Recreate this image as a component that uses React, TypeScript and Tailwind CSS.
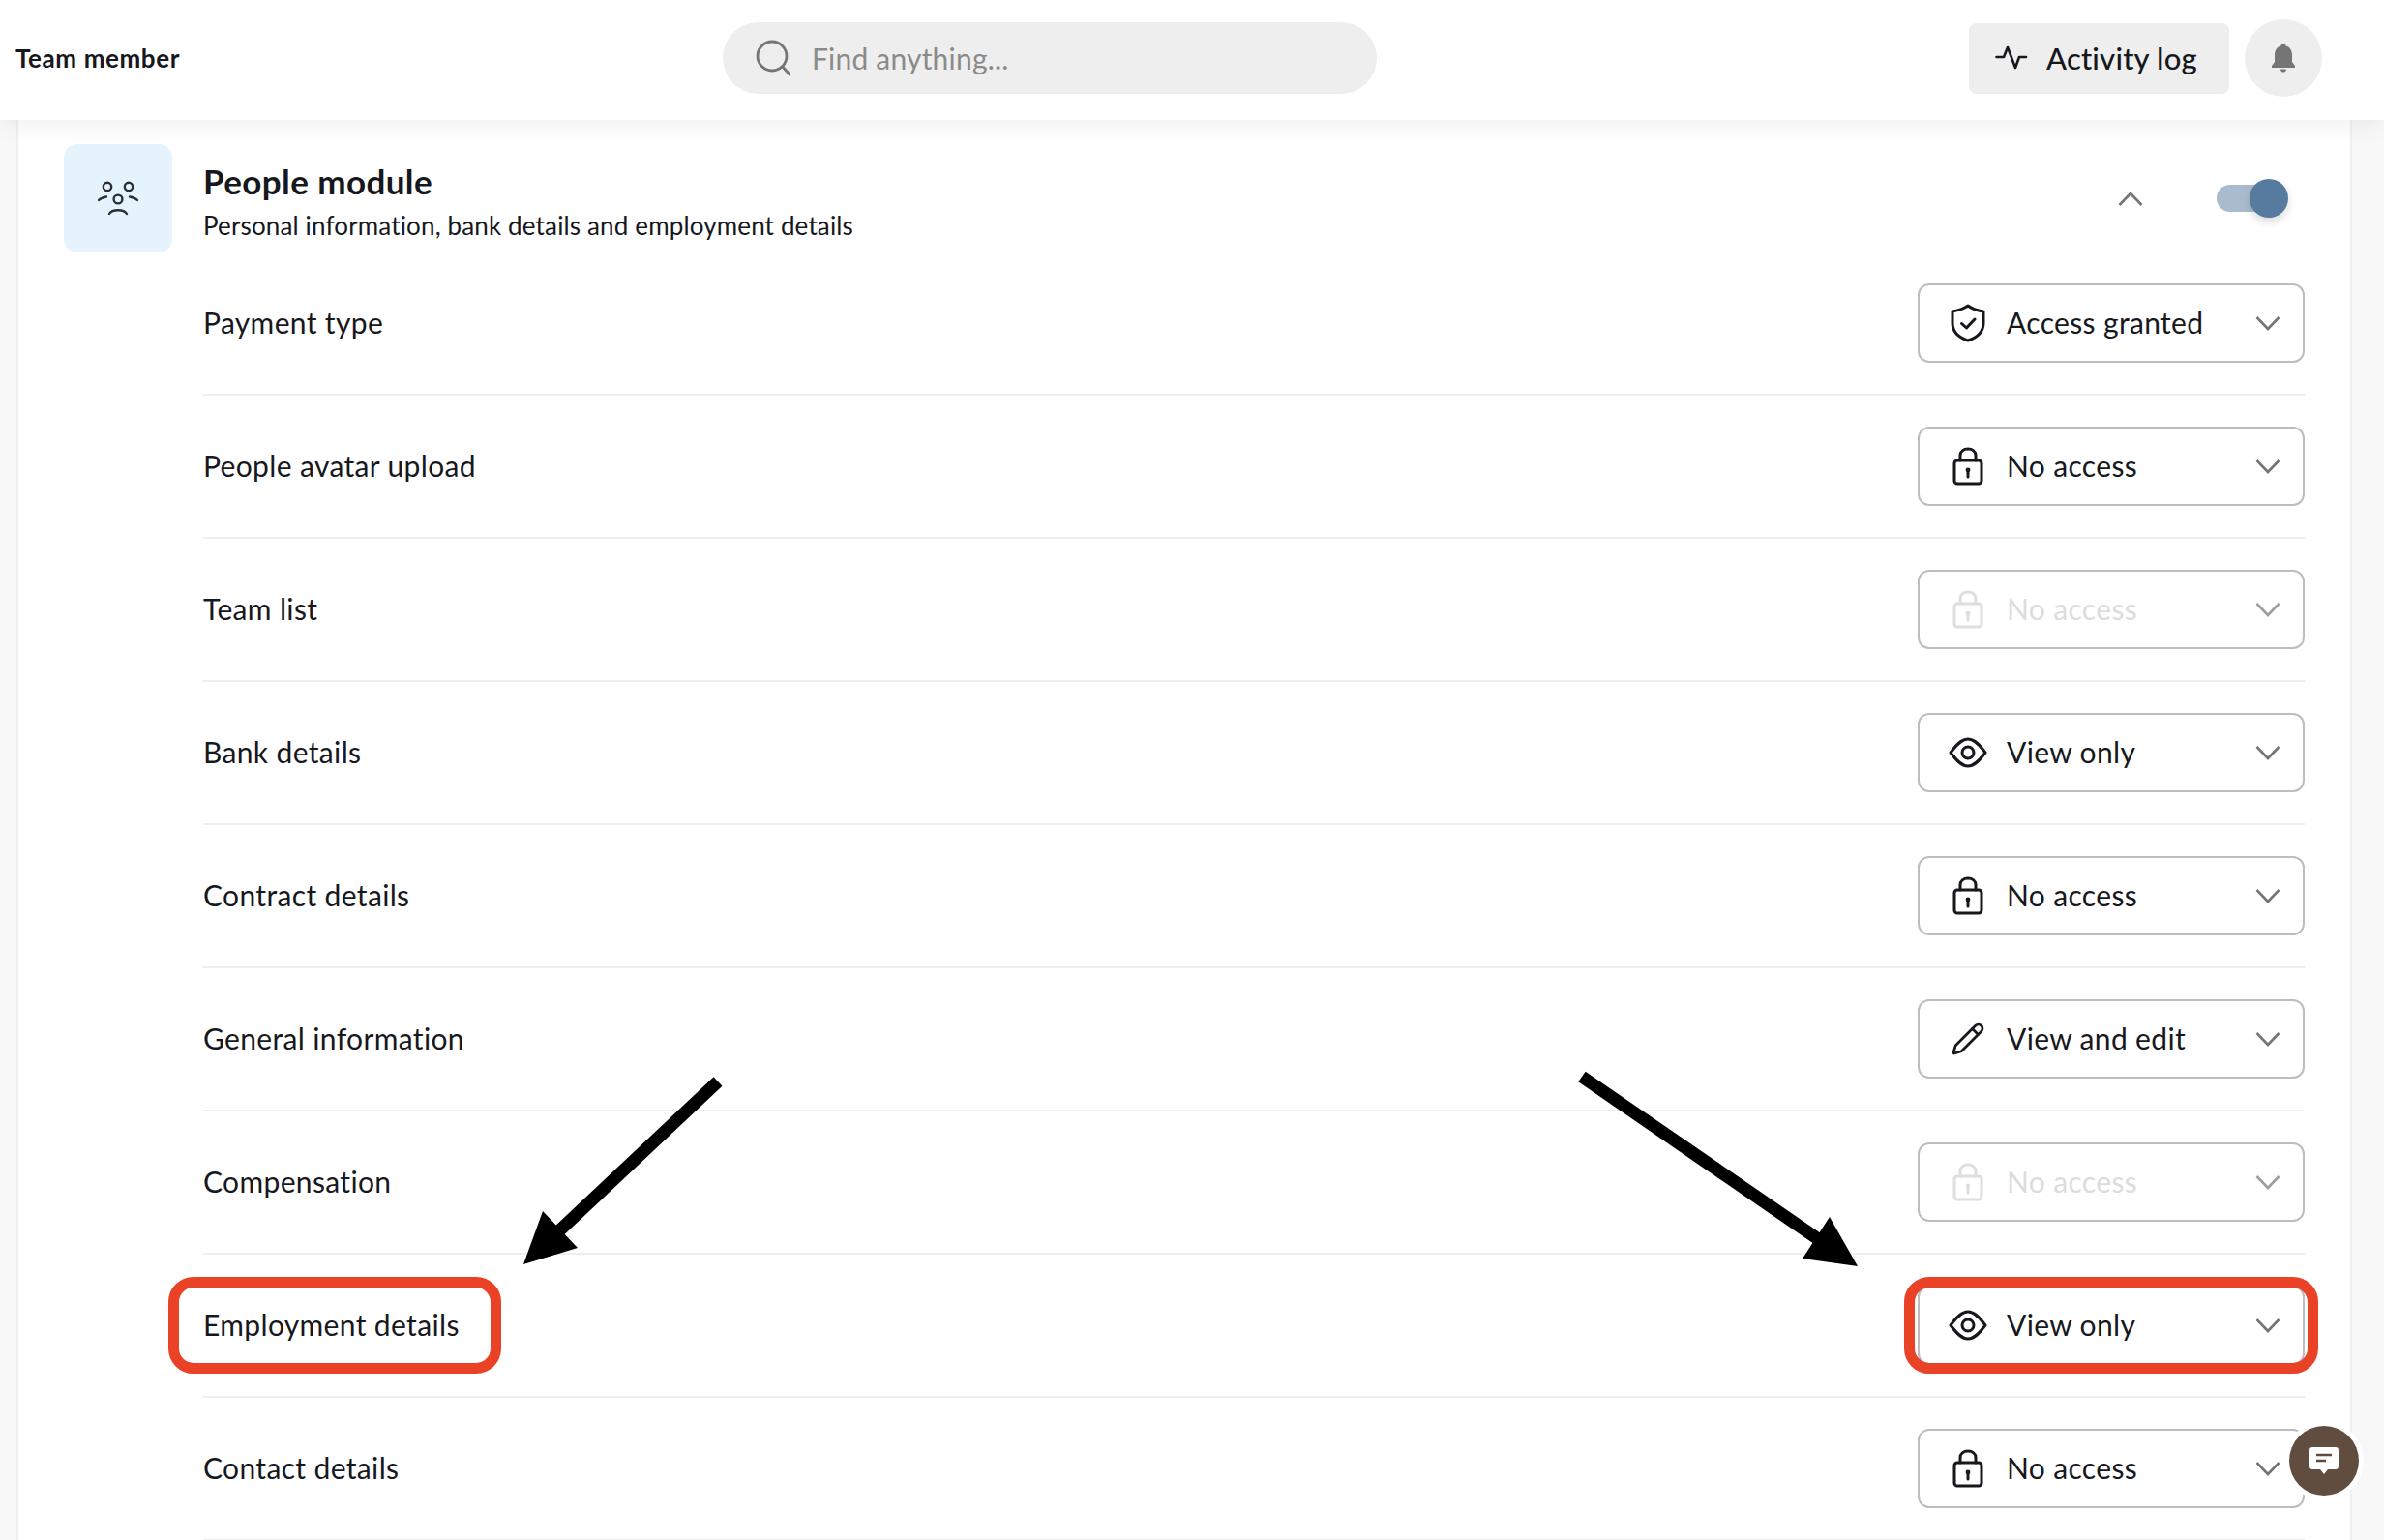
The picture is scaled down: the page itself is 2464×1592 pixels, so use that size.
import { Pencil } from "lucide-react";
import type { ReactNode } from "react";

type Access = "granted" | "none" | "disabled" | "view" | "edit";

const rows: { label: string; access: Access }[] = [
  { label: "Payment type", access: "granted" },
  { label: "People avatar upload", access: "none" },
  { label: "Team list", access: "disabled" },
  { label: "Bank details", access: "view" },
  { label: "Contract details", access: "none" },
  { label: "General information", access: "edit" },
  { label: "Compensation", access: "disabled" },
  { label: "Employment details", access: "view" },
  { label: "Contact details", access: "none" },
];

const ShieldIcon = () => (
  <svg width="38" height="40" viewBox="0 0 38 40" fill="none" stroke="currentColor" strokeWidth="3" strokeLinejoin="round" strokeLinecap="round">
    <path d="M19 2 C24 6 29 7 35 8 V20 C35 29 28 35 19 38 C10 35 3 29 3 20 V8 C9 7 14 6 19 2 Z" />
    <path d="M12.5 20.5 L17.5 25 L26 16" />
  </svg>
);

const LockIcon = () => (
  <svg width="32" height="40" viewBox="0 0 32 40" fill="none" stroke="currentColor" strokeWidth="3" strokeLinejoin="round" strokeLinecap="round">
    <rect x="2" y="14" width="28" height="24" rx="3" />
    <path d="M8 14 V9 C8 4.5 11.5 2 16 2 C20.5 2 24 4.5 24 9 V14" />
    <circle cx="16" cy="24" r="2.4" fill="currentColor" stroke="none" />
    <path d="M16 25 V31" />
  </svg>
);

const EyeIcon = () => (
  <svg width="40" height="32" viewBox="0 0 40 32" fill="none" stroke="currentColor" strokeWidth="3" strokeLinejoin="round">
    <path d="M2 16 C6 11 12 2 20 2 C28 2 34 11 38 16 C34 21 28 30 20 30 C12 30 6 21 2 16 Z" />
    <circle cx="20" cy="16" r="6" />
  </svg>
);

const accessInfo: Record<Access, { text: string; icon: ReactNode }> = {
  granted: { text: "Access granted", icon: <ShieldIcon /> },
  none: { text: "No access", icon: <LockIcon /> },
  disabled: { text: "No access", icon: <LockIcon /> },
  view: { text: "View only", icon: <EyeIcon /> },
  edit: { text: "View and edit", icon: <Pencil size={36} strokeWidth={1.8} /> },
};

const AccessSelect = ({ access }: { access: Access }) => {
  const info = accessInfo[access];
  const disabled = access === "disabled";
  return (
    <div className="flex h-[82px] w-[400px] items-center rounded-[12px] border-2 border-[#bdbdbd] bg-white pl-[28px] pr-[23px]">
      <div className={`flex w-[44px] justify-center ${disabled ? "text-[#dedede]" : "text-[#16181d]"}`}>
        {info.icon}
      </div>
      <span className={`ml-[18px] pb-[2px] text-[30px] tracking-[0.35px] ${disabled ? "text-[#dcdcdc]" : "text-[#16181d]"}`}>
        {info.text}
      </span>
      <svg className={`ml-auto ${disabled ? "opacity-70" : ""}`} width="26" height="16" viewBox="0 0 26 16" fill="none" stroke="#757575" strokeWidth="2.6">
        <path d="M1.5 2 L13 14 L24.5 2" />
      </svg>
    </div>
  );
};

export default function App() {
  return (
    <div className="relative h-[1592px] overflow-hidden bg-[#f8f8f8] font-['Lato',sans-serif] text-[#16181d]">
      <header className="relative z-10 flex h-[124px] items-center bg-white pb-[4px] pl-4 pr-[64px] shadow-[0_2px_24px_rgba(0,0,0,0.08)]">
        <div className="w-[731px] text-[26px] font-bold tracking-[0.6px]">Team member</div>
        <div className="flex h-[74px] w-[676px] items-center rounded-full bg-[#eeeeee] pl-[33px]">
          <svg width="40" height="40" viewBox="0 0 40 40" fill="none" stroke="#757575" strokeWidth="2.8" strokeLinecap="round">
            <circle cx="18" cy="18" r="15" />
            <path d="M29 29 L36 37" />
          </svg>
          <span className="ml-[19px] text-[30px] tracking-[0.2px] text-[#8a8a8a]">Find anything...</span>
        </div>
        <div className="ml-auto flex h-[73px] w-[269px] items-center rounded-[8px] bg-[#eeeeee] pl-[27px]">
          <svg width="34" height="26" viewBox="0 0 34 26" fill="none" stroke="#16181d" strokeWidth="2.6" strokeLinecap="round" strokeLinejoin="round">
            <path d="M1.5 12 H9 L13 2 L21 23 L25 12 H32" />
          </svg>
          <span className="ml-[19px] text-[31px] font-medium tracking-[0.2px]">Activity log</span>
        </div>
        <div className="ml-4 flex h-[80px] w-[80px] items-center justify-center rounded-full bg-[#eeeeee]">
          <svg width="26" height="30" viewBox="0 0 26 30" fill="#757575">
            <path d="M13 0 C14.5 0 15.5 1 15.5 2.6 C20 3.8 22 7.5 22 12 V19 L25 23 V25 H1 V23 L4 19 V12 C4 7.5 6 3.8 10.5 2.6 C10.5 1 11.5 0 13 0 Z" />
            <path d="M10 26.5 H16 C16 28.5 14.5 29.6 13 29.6 C11.5 29.6 10 28.5 10 26.5 Z" />
          </svg>
        </div>
      </header>

      <main className="ml-[17px] h-[1468px] w-[2414px] border-x-2 border-[#efefef] bg-white">
        <section className="flex h-[137px] items-start pl-[47px] pr-[68px] pt-[25px]">
          <div className="flex h-[112px] w-[112px] items-center justify-center rounded-[14px] bg-[#e5f3fd]">
            <svg width="44" height="36" viewBox="0 0 44 36" fill="none" stroke="#2b3038" strokeWidth="2.4" strokeLinecap="round">
              <circle cx="11" cy="6" r="4.2" />
              <circle cx="33" cy="6" r="4.2" />
              <circle cx="22" cy="19" r="4.4" />
              <path d="M2 20 C4 18 7 17 10 16.5" />
              <path d="M42 20 C40 18 37 17 34 16.5" />
              <path d="M13 34 C16 29 28 29 31 34" />
            </svg>
          </div>
          <div className="ml-[32px] mt-[18px]">
            <div className="text-[35px] font-bold leading-[40px] tracking-[0.4px]">People module</div>
            <div className="mt-[10px] text-[26px] leading-[32px] tracking-[0.15px]">Personal information, bank details and employment details</div>
          </div>
          <svg className="ml-auto mt-[49px]" width="26" height="16" viewBox="0 0 26 16" fill="none" stroke="#757575" strokeWidth="2.6">
            <path d="M1.5 14 L13 2 L24.5 14" />
          </svg>
          <div className="relative ml-[76px] mt-[42px] h-[28px] w-[70px] rounded-full bg-[#a9bccd]">
            <div className="absolute -top-[6px] right-[-4px] h-[40px] w-[40px] rounded-full bg-[#567b9e] shadow-[0_4px_10px_rgba(0,0,0,0.15)]" />
          </div>
        </section>

        <div className="ml-[191px] w-[2172px]">
          {rows.map((row) => (
            <div key={row.label} className="flex h-[148px] items-center justify-between border-b-2 border-[#eeeeee]">
              <span className="pb-[2px] text-[30px] tracking-[0.35px]">{row.label}</span>
              <AccessSelect access={row.access} />
            </div>
          ))}
        </div>
      </main>

      {/* annotations drawn on top of the screenshot */}
      <div className="absolute left-[174px] top-[1320px] h-[100px] w-[344px] rounded-[26px] border-[11px] border-[#ea4227]" />
      <div className="absolute left-[1968px] top-[1320px] h-[100px] w-[428px] rounded-[26px] border-[11px] border-[#ea4227]" />
      <svg className="absolute left-0 top-0" width="2464" height="1592" fill="black">
        <path d="M742 1118 L572 1278" stroke="black" strokeWidth="13" />
        <polygon points="541,1307 561,1252 597,1290" />
        <path d="M1635 1113 L1885 1285" stroke="black" strokeWidth="13" />
        <polygon points="1920,1309 1891,1258 1863,1301" />
      </svg>

      <div className="absolute left-[2366px] top-[1474px] flex h-[72px] w-[72px] items-center justify-center rounded-full bg-[#614d3f] shadow-[0_0_0_5px_white]">
        <svg width="32" height="30" viewBox="0 0 32 30" fill="white">
          <path d="M4 1 H28 C30 1 31 2 31 4 V21 C31 23 30 24 28 24 H20 L16 29 L12 24 H4 C2 24 1 23 1 21 V4 C1 2 2 1 4 1 Z" />
          <path d="M8 9 H24 M8 15 H18" stroke="#614d3f" strokeWidth="2.4" />
        </svg>
      </div>
    </div>
  );
}
